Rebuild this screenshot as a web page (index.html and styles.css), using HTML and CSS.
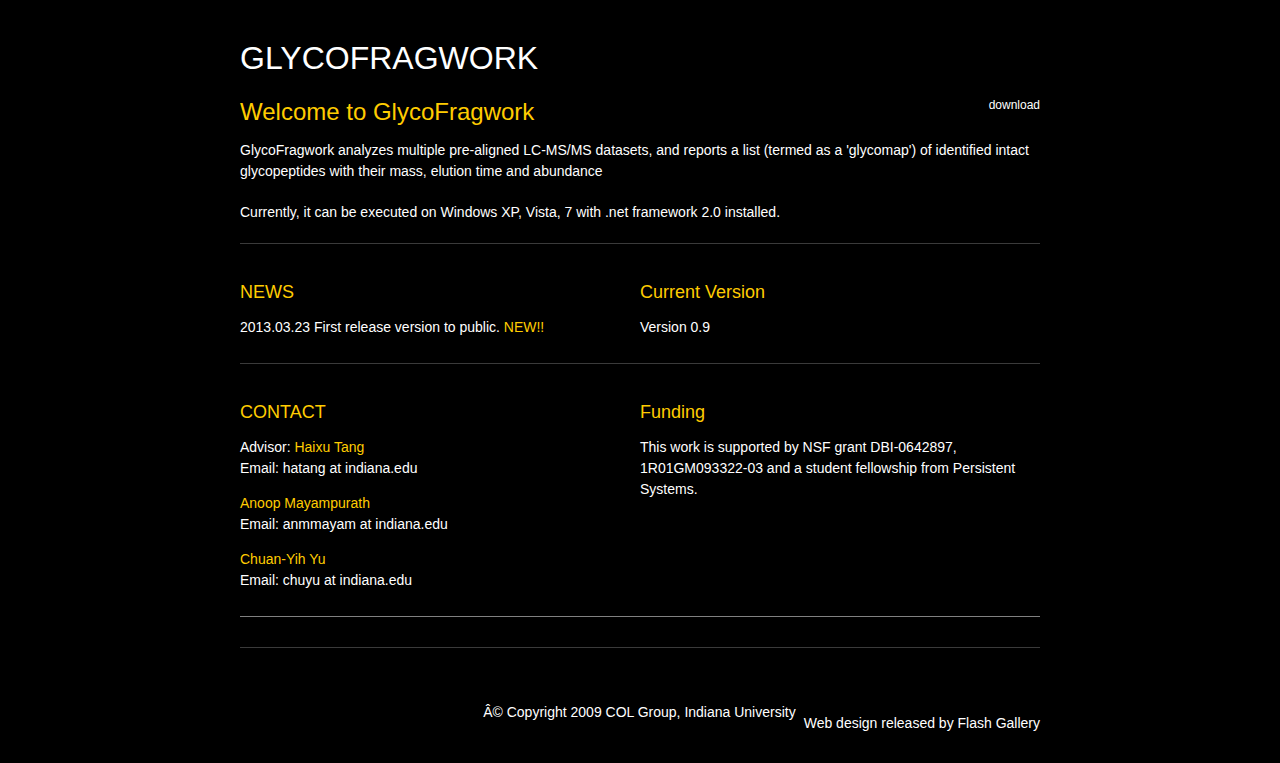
FILE: index.html
```html
<!DOCTYPE html>
<html>
<head>
<meta charset="utf-8">
<title>GlycoFragwork</title>
<link rel="stylesheet" href="styles.css">
</head>
<body>
<div class="wrap">
  <header class="masthead">
    <h1 class="logo">GLYCOFRAGWORK</h1>
  </header>
  <section class="intro">
    <div class="intro-head">
      <h2 class="intro-title">Welcome to GlycoFragwork</h2>
      <a class="download" href="#">download</a>
    </div>
    <p class="text">GlycoFragwork analyzes multiple pre-aligned LC-MS/MS datasets, and reports a list (termed as a 'glycomap') of identified intact glycopeptides with their mass, elution time and abundance</p>
    <p class="text">Currently, it can be executed on Windows XP, Vista, 7 with .net framework 2.0 installed.</p>
  </section>
  <div class="rule"></div>
  <section class="row">
    <div class="col">
      <h3 class="heading">NEWS</h3>
      <p class="text">2013.03.23 First release version to public. <span class="hl">NEW!!</span></p>
    </div>
    <div class="col">
      <h3 class="heading">Current Version</h3>
      <p class="text">Version 0.9</p>
    </div>
  </section>
  <div class="rule"></div>
  <section class="row">
    <div class="col">
      <h3 class="heading">CONTACT</h3>
      <p class="text">Advisor: <a class="hl" href="#">Haixu Tang</a><br>Email: hatang at indiana.edu</p>
      <p class="text"><a class="hl" href="#">Anoop Mayampurath</a><br>Email: anmmayam at indiana.edu</p>
      <p class="text"><a class="hl" href="#">Chuan-Yih Yu</a><br>Email: chuyu at indiana.edu</p>
    </div>
    <div class="col">
      <h3 class="heading">Funding</h3>
      <p class="text">This work is supported by NSF grant DBI-0642897, 1R01GM093322-03 and a student fellowship from Persistent Systems.</p>
    </div>
  </section>
  <div class="rule rule-light"></div>
  <div class="spacer"></div>
  <div class="rule"></div>
  <footer class="footer">
    <span class="copy">Â© Copyright 2009 COL Group, Indiana University</span>
    <span class="credit">Web design released by Flash Gallery</span>
  </footer>
</div>
</body>
</html>
```

FILE: styles.css
```css
html, body {
  margin: 0;
  padding: 0;
  background: #000;
}
body {
  color: #fff;
  font-family: "Liberation Sans", Arial, sans-serif;
  font-size: 14px;
}
.wrap {
  width: 800px;
  margin: 0 auto;
}
.masthead {
  padding-top: 38px;
}
.logo {
  margin: 0;
  font-size: 32px;
  font-weight: normal;
  line-height: 40px;
  color: #fff;
}
.intro {
  padding-top: 19px;
}
.intro-head {
  display: flex;
  justify-content: space-between;
  align-items: flex-start;
}
.intro-title {
  margin: 0;
  font-size: 24px;
  font-weight: normal;
  line-height: 30px;
  color: #ffcc00;
}
.download {
  color: #fff;
  text-decoration: none;
  font-size: 12px;
  line-height: 16px;
  padding-top: 0;
}
.text {
  margin: 0;
  line-height: 21px;
}
.intro .text {
  margin-top: 13px;
}
.intro .text + .text {
  margin-top: 20px;
}
.rule {
  height: 1px;
  background: #3a3a3a;
  margin-top: 20px;
}
.rule-light {
  background: #808080;
}
.row {
  display: flex;
  padding: 36px 0 25px;
}
.row + .rule {
  margin-top: 0;
}
.col {
  width: 400px;
}
.heading {
  margin: 0 0 13px;
  font-size: 18px;
  font-weight: normal;
  line-height: 24px;
  color: #ffcc00;
}
.col .text + .text {
  margin-top: 14px;
}
.hl {
  color: #ffcc00;
  text-decoration: none;
}
.spacer {
  height: 30px;
}
.spacer + .rule {
  margin-top: 0;
}
.footer {
  display: flex;
  justify-content: flex-end;
  align-items: flex-start;
  gap: 8px;
  padding-top: 54px;
  padding-bottom: 30px;
}
.copy {
  line-height: 20px;
}
.credit {
  line-height: 20px;
  padding-top: 11px;
}
```
